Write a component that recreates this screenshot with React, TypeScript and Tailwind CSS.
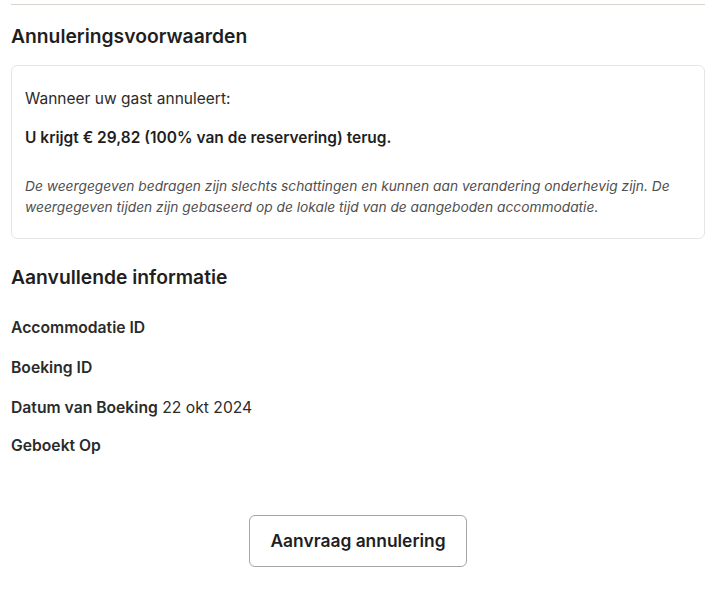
export default function App() {
  return (
    <div className="w-[720px] h-[595px] bg-white" style={{ fontFamily: "Inter, 'Noto Sans', sans-serif" }}>
      <div className="ml-[11px] w-[694px] pt-[4px]">
        <div className="border-t border-[#d9d4cf]" />
        <h2 className="mt-[18px] text-[19.3px] leading-[26px] font-semibold text-[#1f1f1f]">Annuleringsvoorwaarden</h2>
        <div className="mt-[16px] border border-[#e8e5e2] rounded-[6px] px-[13px] pt-[23px] h-[174px]">
          <p className="text-[15.5px] leading-[20px] text-[#2b2b2b]">Wanneer uw gast annuleert:</p>
          <p className="mt-[19px] text-[15.5px] leading-[20px] font-semibold text-[#1f1f1f]">U krijgt € 29,82 (100% van de reservering) terug.</p>
          <p className="mt-[28px] text-[13.75px] leading-[21px] italic text-[#4f4f4f]">
            De weergegeven bedragen zijn slechts schattingen en kunnen aan verandering onderhevig zijn. De weergegeven tijden zijn gebaseerd op de lokale tijd van de aangeboden accommodatie.
          </p>
        </div>
        <h2 className="mt-[25px] text-[19.3px] leading-[26px] font-semibold text-[#1f1f1f]">Aanvullende informatie</h2>
        <div className="mt-[28px] flex flex-col gap-[20px] text-[15.7px] leading-[20px] text-[#2b2b2b]">
          <p><span className="font-semibold">Accommodatie ID</span></p>
          <p><span className="font-semibold">Boeking ID</span></p>
          <p><span className="font-semibold">Datum van Boeking</span> 22 okt 2024</p>
          <p className="-mt-[2px]"><span className="font-semibold">Geboekt Op</span></p>
        </div>
        <div className="mt-[59px] flex justify-center">
          <button className="w-[218px] h-[52px] border border-[#a8a5a2] rounded-[6px] bg-white text-[17.4px] font-semibold text-[#1f1f1f]">
            Aanvraag annulering
          </button>
        </div>
      </div>
    </div>
  );
}
